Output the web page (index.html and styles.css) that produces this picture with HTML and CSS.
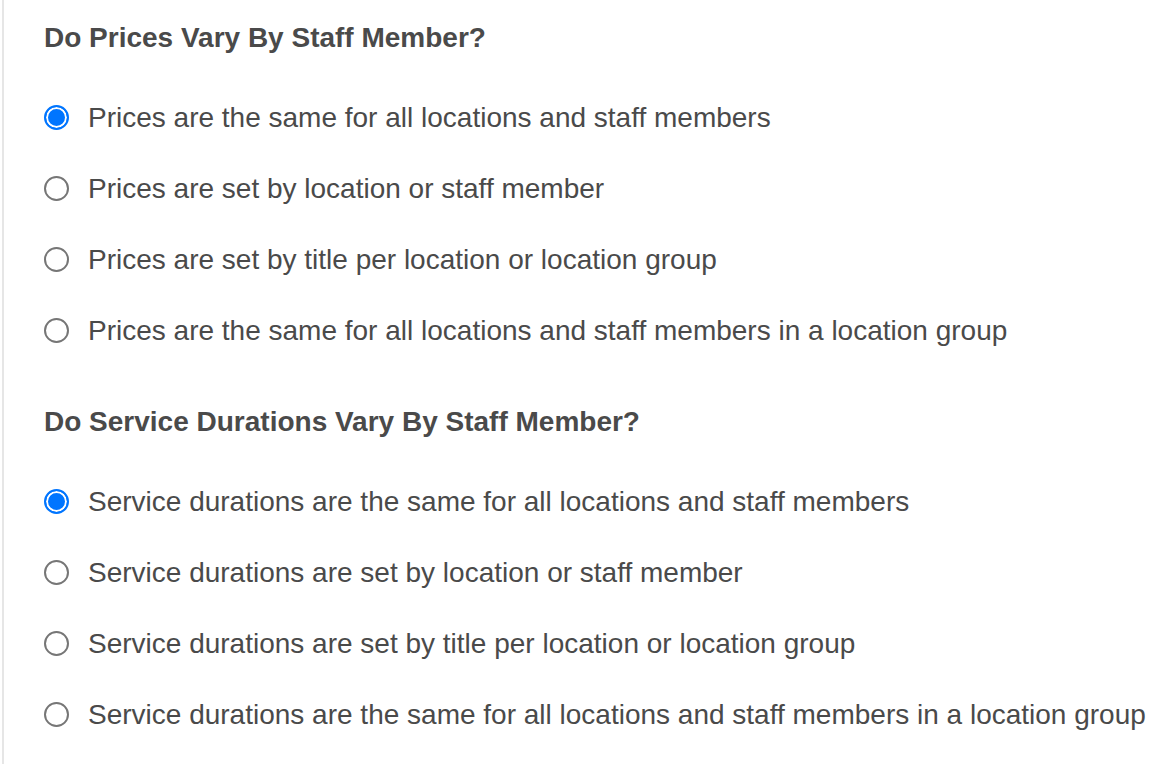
FILE: index.html
```html
<!DOCTYPE html>
<html lang="en">

<head>
  <meta charset="UTF-8">
  <meta name="viewport" content="width=device-width, initial-scale=1.0">
  <title>Service Settings</title>
  <link rel="stylesheet" href="styles.css">
</head>

<body>
  <div class="panel">
    <div class="question">
      <h2>Do Prices Vary By Staff Member?</h2>
      <div class="options">
        <label class="option"><input type="radio" name="prices" checked> Prices are the same for all locations and staff members</label>
        <label class="option"><input type="radio" name="prices"> Prices are set by location or staff member</label>
        <label class="option"><input type="radio" name="prices"> Prices are set by title per location or location group</label>
        <label class="option"><input type="radio" name="prices"> Prices are the same for all locations and staff members in a location group</label>
      </div>
    </div>

    <div class="question">
      <h2>Do Service Durations Vary By Staff Member?</h2>
      <div class="options">
        <label class="option"><input type="radio" name="durations" checked> Service durations are the same for all locations and staff members</label>
        <label class="option"><input type="radio" name="durations"> Service durations are set by location or staff member</label>
        <label class="option"><input type="radio" name="durations"> Service durations are set by title per location or location group</label>
        <label class="option"><input type="radio" name="durations"> Service durations are the same for all locations and staff members in a location group</label>
      </div>
    </div>
  </div>
</body>

</html>
```

FILE: styles.css
```css
body {
  font-family: 'Liberation Sans', Arial, sans-serif;
  background-color: white;
  color: #4a4a4a;
  margin: 0;
  padding: 0 0 0 2px;
}

.panel {
  border-left: 2px solid #e6e6e6;
  min-height: 764px;
  box-sizing: border-box;
  padding: 23px 0 0 40px;
}

.question {
  margin-bottom: 41px;
}

.question h2 {
  margin: 0;
  font-size: 28px;
  line-height: 30px;
  font-weight: bold;
}

.options {
  display: flex;
  flex-direction: column;
  margin-top: 29px;
}

.option {
  display: flex;
  align-items: center;
  gap: 19px;
  height: 71px;
  font-size: 28px;
  white-space: nowrap;
  cursor: pointer;
}

.option input {
  appearance: none;
  -webkit-appearance: none;
  width: 25px;
  height: 25px;
  margin: 0;
  flex-shrink: 0;
  border: 2px solid #767676;
  border-radius: 50%;
  background-color: white;
  box-sizing: border-box;
  cursor: pointer;
}

.option input:checked {
  border: 2.5px solid #0075ff;
  background-color: #0075ff;
  box-shadow: inset 0 0 0 2px white;
}
```
